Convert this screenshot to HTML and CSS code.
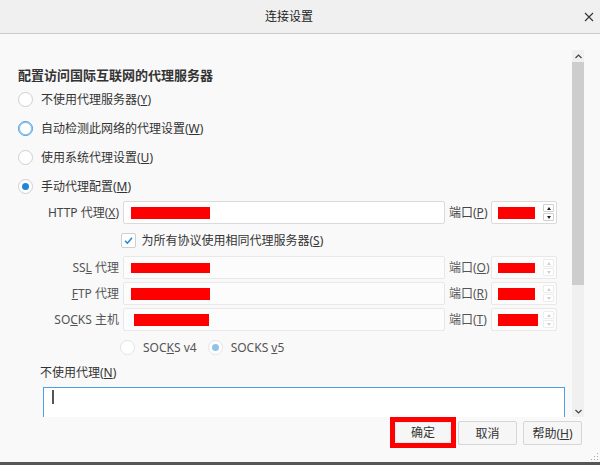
FILE: index.html
```html
<!DOCTYPE html>
<html lang="zh-CN">
<head>
    <meta charset="UTF-8">
    <title>连接设置</title>
    <link rel="stylesheet" href="styles.css">
</head>
<body>
    <div class="dialog">
        <div class="titlebar">
            <div class="title">连接设置</div>
            <svg class="close" width="10" height="10" viewBox="0 0 10 10">
                <path d="M1 1 L9 9 M9 1 L1 9" stroke="#333" stroke-width="1.1" fill="none"/>
            </svg>
        </div>

        <div class="content">
            <h1 class="heading">配置访问国际互联网的代理服务器</h1>

            <div class="radio-list">
                <div class="radio-row"><span class="radio"></span><span>不使用代理服务器(<u>Y</u>)</span></div>
                <div class="radio-row"><span class="radio focused"></span><span>自动检测此网络的代理设置(<u>W</u>)</span></div>
                <div class="radio-row"><span class="radio"></span><span>使用系统代理设置(<u>U</u>)</span></div>
                <div class="radio-row"><span class="radio checked"></span><span>手动代理配置(<u>M</u>)</span></div>
            </div>

            <div class="proxy-row">
                <div class="field-label"><span>HTTP 代理(<u>X</u>)</span></div>
                <div class="field"><span class="redact"></span></div>
                <div class="port-label"><span>端口(<u>P</u>)</span></div>
                <div class="field port">
                    <span class="redact short"></span>
                    <span class="spin">
                        <span class="spin-btn"><span class="tri up"></span></span>
                        <span class="spin-btn"><span class="tri down"></span></span>
                    </span>
                </div>
            </div>

            <div class="same-row">
                <span class="checkbox">
                    <svg width="11" height="11" viewBox="0 0 11 11"><path d="M2 5.8 L4.4 8.2 L9 2.8" stroke="#1c87d4" stroke-width="1.5" fill="none"/></svg>
                </span>
                <span>为所有协议使用相同代理服务器(<u>S</u>)</span>
            </div>

            <div class="proxy-row disabled">
                <div class="field-label"><span>SS<u>L</u> 代理</span></div>
                <div class="field"><span class="redact thin"></span></div>
                <div class="port-label"><span>端口(<u>O</u>)</span></div>
                <div class="field port">
                    <span class="redact short thin"></span>
                    <span class="spin">
                        <span class="spin-btn"><span class="tri up"></span></span>
                        <span class="spin-btn"><span class="tri down"></span></span>
                    </span>
                </div>
            </div>

            <div class="proxy-row disabled spaced">
                <div class="field-label"><span><u>F</u>TP 代理</span></div>
                <div class="field"><span class="redact"></span></div>
                <div class="port-label"><span>端口(<u>R</u>)</span></div>
                <div class="field port">
                    <span class="redact short"></span>
                    <span class="spin">
                        <span class="spin-btn"><span class="tri up"></span></span>
                        <span class="spin-btn"><span class="tri down"></span></span>
                    </span>
                </div>
            </div>

            <div class="proxy-row disabled spaced">
                <div class="field-label"><span>SO<u>C</u>KS 主机</span></div>
                <div class="field"><span class="redact socks"></span></div>
                <div class="port-label"><span>端口(<u>T</u>)</span></div>
                <div class="field port">
                    <span class="redact short wide"></span>
                    <span class="spin">
                        <span class="spin-btn"><span class="tri up"></span></span>
                        <span class="spin-btn"><span class="tri down"></span></span>
                    </span>
                </div>
            </div>

            <div class="socks-version">
                <div class="radio-opt"><span class="radio disabled"></span><span>SOC<u>K</u>S v4</span></div>
                <div class="radio-opt"><span class="radio disabled checked"></span><span>SOCKS <u>v</u>5</span></div>
            </div>

            <div class="no-proxy-label">不使用代理(<u>N</u>)</div>
            <div class="exceptions"><span class="caret"></span></div>

            <div class="scrollbar">
                <div class="scroll-btn">
                    <svg width="7" height="5" viewBox="0 0 7 5"><path d="M0.5 4 L3.5 1 L6.5 4" stroke="#444" stroke-width="1.2" fill="none"/></svg>
                </div>
                <div class="thumb"></div>
                <div class="track"></div>
                <div class="scroll-btn">
                    <svg width="7" height="5" viewBox="0 0 7 5"><path d="M0.5 1 L3.5 4 L6.5 1" stroke="#444" stroke-width="1.2" fill="none"/></svg>
                </div>
            </div>
        </div>

        <div class="footer">
            <div class="ok-wrap"><button class="btn">确定</button></div>
            <button class="btn cancel">取消</button>
            <button class="btn">帮助(<u>H</u>)</button>
            <svg class="grip" width="8" height="8" viewBox="0 0 8 8">
                <rect x="6" y="0" width="1" height="1" fill="#aaa"/>
                <rect x="3" y="3" width="1" height="1" fill="#aaa"/>
                <rect x="6" y="3" width="1" height="1" fill="#aaa"/>
                <rect x="0" y="6" width="1" height="1" fill="#aaa"/>
                <rect x="3" y="6" width="1" height="1" fill="#aaa"/>
                <rect x="6" y="6" width="1" height="1" fill="#aaa"/>
            </svg>
        </div>
    </div>
</body>
</html>
```

FILE: styles.css
```css
body {
    margin: 0;
    font-family: "Noto Sans", "Noto Sans CJK SC", sans-serif;
    font-size: 12px;
    line-height: 1.25;
    color: #333;
    background: #f9f9f9;
}
u {
    text-underline-offset: 1px;
}
.dialog {
    width: 600px;
    height: 465px;
    display: flex;
    flex-direction: column;
    border-bottom: 3px solid #565656;
    box-sizing: border-box;
    overflow: hidden;
}
.titlebar {
    height: 34px;
    flex-shrink: 0;
    box-sizing: border-box;
    border-bottom: 1px solid #cbcbcb;
    background: #f0f0f0;
    display: flex;
    align-items: center;
    padding-right: 22px;
    position: relative;
}
.title {
    flex: 1;
    text-align: center;
    color: #222;
}
.close {
    position: absolute;
    right: 6px;
    top: 12px;
}
.content {
    height: 383px;
    flex-shrink: 0;
    box-sizing: border-box;
    padding: 31px 0 0 18px;
    position: relative;
    overflow: hidden;
}
.heading {
    margin: 0;
    font-size: 13px;
    font-weight: bold;
    line-height: 20px;
    height: 20px;
    color: #333;
}
.radio-list {
    display: flex;
    flex-direction: column;
}
.radio-row {
    display: flex;
    align-items: center;
    gap: 8px;
    height: 29px;
    white-space: nowrap;
}
.radio {
    width: 15px;
    height: 15px;
    box-sizing: border-box;
    border: 1px solid #cfcfcf;
    border-radius: 50%;
    background: #fff;
    display: flex;
    align-items: center;
    justify-content: center;
    flex-shrink: 0;
}
.radio.focused {
    border-color: #3f98e4;
    box-shadow: inset 0 0 0 1px #8cc2f0;
}
.radio.checked::after {
    content: "";
    width: 7px;
    height: 7px;
    border-radius: 50%;
    background: #1f88d4;
}
.radio.disabled {
    border-color: #e3e3e3;
}
.radio.disabled.checked::after {
    background: #8dc4ea;
}
.proxy-row {
    display: grid;
    grid-template-columns: 101px 322px 38px 66px;
    column-gap: 4px;
    height: 23px;
}
.proxy-row.spaced {
    margin-top: 3px;
}
.field-label {
    display: flex;
    align-items: center;
    justify-content: flex-end;
    white-space: nowrap;
    color: #444;
}
.port-label {
    display: flex;
    align-items: center;
    white-space: nowrap;
    color: #444;
}
.disabled .field-label,
.disabled .port-label {
    color: #555;
}
.field {
    position: relative;
    display: flex;
    align-items: center;
    box-sizing: border-box;
    padding-left: 7px;
    background: #fff;
    border: 1px solid #dadada;
    border-radius: 2px;
}
.field.port {
    padding-left: 6px;
}
.disabled .field {
    background: #fcfcfc;
    border-color: #e8e8e8;
}
.redact {
    width: 79px;
    height: 12px;
    background: #f00;
}
.redact.thin {
    height: 10px;
}
.redact.socks {
    width: 75px;
    margin-left: 3px;
}
.redact.short {
    width: 37px;
}
.redact.short.wide {
    width: 40px;
}
.spin {
    position: absolute;
    right: 2px;
    top: 2px;
    display: flex;
    flex-direction: column;
    gap: 1px;
}
.spin-btn {
    width: 11px;
    height: 8px;
    box-sizing: border-box;
    border: 1px solid #cfcfcf;
    border-radius: 1px;
    background: #fff;
    display: flex;
    align-items: center;
    justify-content: center;
}
.tri {
    width: 0;
    height: 0;
    border-left: 2.5px solid transparent;
    border-right: 2.5px solid transparent;
}
.tri.up {
    border-bottom: 3px solid #222;
}
.tri.down {
    border-top: 3px solid #222;
}
.disabled .spin-btn {
    border-color: #ececec;
}
.disabled .tri.up {
    border-bottom-color: #d0d0d0;
}
.disabled .tri.down {
    border-top-color: #d0d0d0;
}
.same-row {
    height: 32px;
    display: flex;
    align-items: center;
    gap: 6px;
    padding-left: 102.5px;
    white-space: nowrap;
}
.checkbox {
    width: 15px;
    height: 15px;
    box-sizing: border-box;
    border: 1px solid #cfcfcf;
    border-radius: 2px;
    background: #fff;
    display: flex;
    align-items: center;
    justify-content: center;
}
.socks-version {
    height: 32px;
    display: flex;
    align-items: center;
    padding-left: 102px;
    color: #555;
}
.radio-opt {
    display: flex;
    align-items: center;
    gap: 8px;
    white-space: nowrap;
}
.radio-opt + .radio-opt {
    margin-left: 11px;
}
.no-proxy-label {
    height: 20px;
    line-height: 20px;
    margin-left: 22px;
}
.exceptions {
    position: relative;
    margin: 4px 0 0 25px;
    width: 522px;
    height: 60px;
    box-sizing: border-box;
    border: 1px solid #4b9fe8;
    background: #fff;
}
.caret {
    position: absolute;
    left: 8px;
    top: 2px;
    width: 2px;
    height: 14px;
    background: #555;
}
.scrollbar {
    position: absolute;
    left: 572px;
    top: 16px;
    bottom: 0;
    width: 12px;
    display: flex;
    flex-direction: column;
    background: #f0f0f0;
}
.scroll-btn {
    height: 12px;
    display: flex;
    align-items: center;
    justify-content: center;
}
.thumb {
    height: 223px;
    background: #cdcdcd;
}
.track {
    flex: 1;
}
.footer {
    height: 45px;
    flex-shrink: 0;
    box-sizing: border-box;
    display: flex;
    justify-content: flex-end;
    align-items: flex-start;
    padding-right: 18px;
    position: relative;
}
.ok-wrap {
    width: 66px;
    height: 31px;
    box-sizing: border-box;
    border: 5px solid #f00;
    margin-right: 2px;
}
.btn {
    width: 59px;
    height: 24px;
    margin-top: 4px;
    padding: 0;
    border: 1px solid #d6d6d6;
    border-radius: 2px;
    background: #f6f6f6;
    font: inherit;
    color: #333;
}
.btn.cancel {
    margin-right: 6px;
}
.ok-wrap .btn {
    width: 100%;
    height: 100%;
    margin: 0;
    border-color: #ececec;
}
.grip {
    position: absolute;
    right: 1px;
    bottom: 1px;
}
```
